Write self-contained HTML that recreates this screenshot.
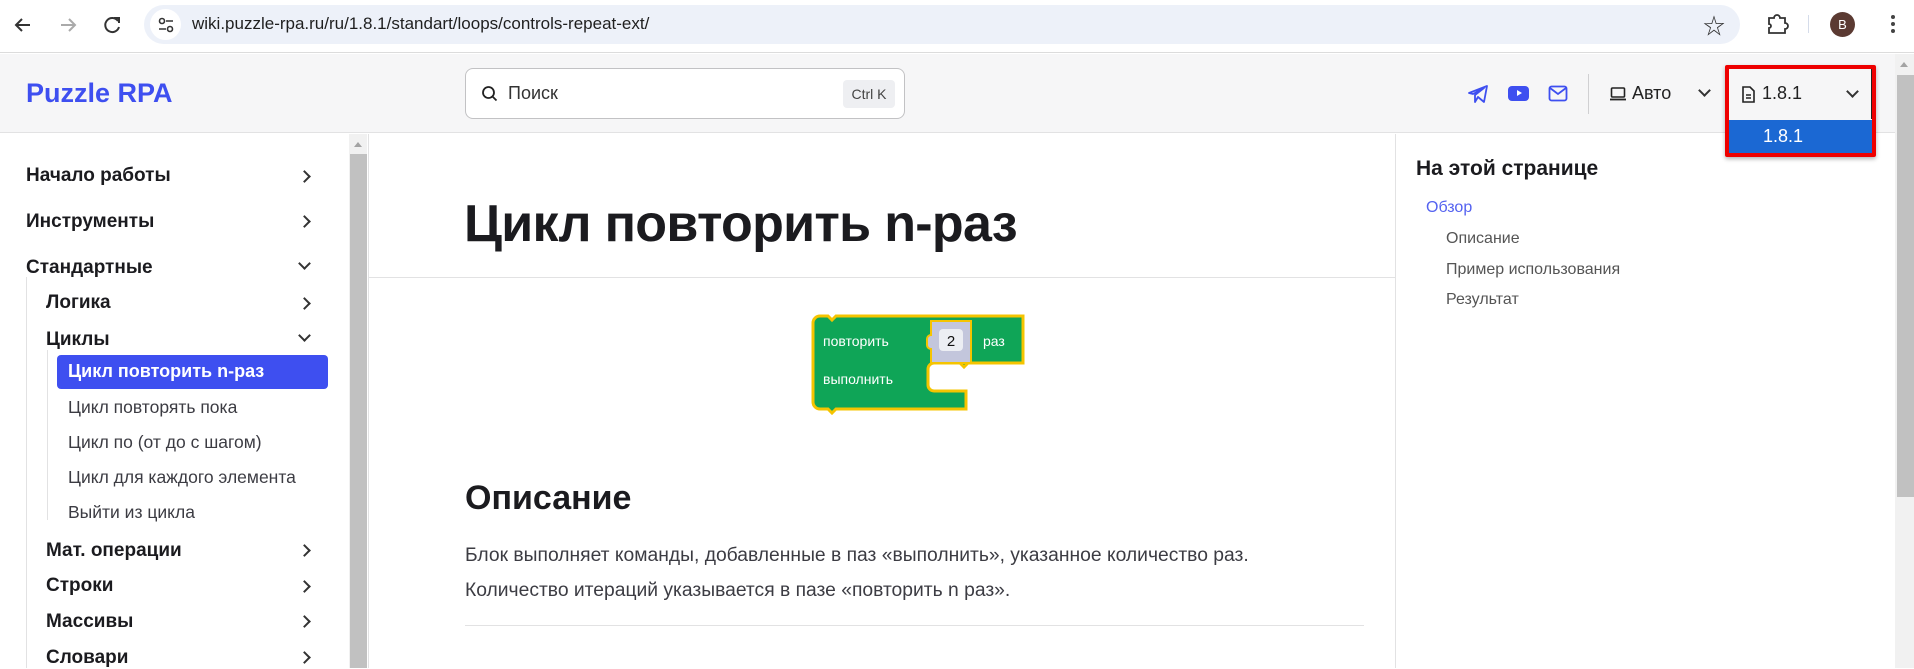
<!DOCTYPE html>
<html><head><meta charset="utf-8"><style>
*{margin:0;padding:0;box-sizing:border-box}
body{width:1914px;height:668px;overflow:hidden;background:#fff;font-family:"Liberation Sans","Noto Sans CJK SC",sans-serif;position:relative;color:#1b1b1f}
.a{position:absolute}
.sb{font-weight:600;font-size:19px;color:#1b1b1f}
.s3{font-size:17.5px;color:#3c3c43}
.chev{position:absolute;left:300px;width:9px;height:9px;border-right:2px solid #333;border-bottom:2px solid #333}
.r{transform:rotate(-45deg)}
.d{transform:rotate(45deg)}
.toc{position:absolute;left:1446px;font-size:16px;color:#555}
</style></head><body>
<div class="a" style="left:0;top:0;width:1914px;height:53px;background:#fff;border-bottom:1px solid #dcdcdc"></div>
<svg class="a" style="left:10px;top:12px" width="130" height="26" viewBox="0 0 130 26">
<path d="M20 13H6M12 7l-6 6 6 6" stroke="#333" stroke-width="2" fill="none"/>
<path d="M51 13h14M59 7l6 6-6 6" stroke="#aaa" stroke-width="2" fill="none"/>
<path d="M108 9a7 7 0 1 0 1 6" stroke="#333" stroke-width="2" fill="none"/><path d="M104 6h5v5" stroke="#333" stroke-width="2" fill="none"/>
</svg>
<div class="a" style="left:144px;top:5px;width:1596px;height:39px;border-radius:20px;background:#edf1f9"></div>
<div class="a" style="left:150px;top:9px;width:31px;height:31px;border-radius:50%;background:#fff"></div>
<svg class="a" style="left:157px;top:16px" width="18" height="18"><circle cx="5" cy="5" r="2.5" stroke="#333" stroke-width="1.6" fill="none"/><path d="M9 5h7M2 13h7" stroke="#333" stroke-width="1.6"/><circle cx="13" cy="13" r="2.5" stroke="#333" stroke-width="1.6" fill="none"/></svg>
<div class="a" style="left:192px;top:14px;font-size:17px;color:#1f1f1f">wiki.puzzle-rpa.ru/ru/1.8.1/standart/loops/controls-repeat-ext/</div>
<div class="a" style="left:1703px;top:9px;font-size:22px;color:#333">☆</div>
<svg class="a" style="left:1765px;top:12px" width="24" height="24"><path d="M4 6h5a3 3 0 0 1 6 0h5v5a3 3 0 0 1 0 6v4H4v-5a2 2 0 0 0 0-4z" stroke="#333" stroke-width="1.8" fill="none"/></svg>
<div class="a" style="left:1808px;top:15px;width:1px;height:18px;background:#d5dcea"></div>
<div class="a" style="left:1830px;top:12px;width:25px;height:25px;border-radius:50%;background:#5b3a32;color:#fff;font-size:13px;text-align:center;line-height:25px">B</div>
<div class="a" style="left:1891px;top:15px;width:4px;height:4px;border-radius:50%;background:#444;box-shadow:0 7px 0 #444,0 14px 0 #444"></div>
<div class="a" style="left:0;top:54px;width:1895px;height:79px;background:#f6f6f7;border-bottom:1px solid #e2e2e3"></div>
<div class="a" style="left:26px;top:78px;font-size:27px;font-weight:600;color:#3e4ff0">Puzzle RPA</div>
<div class="a" style="left:465px;top:68px;width:440px;height:51px;background:#fff;border:1px solid #c2c2c4;border-radius:8px"></div>
<svg class="a" style="left:481px;top:85px" width="18" height="18"><circle cx="7.5" cy="7.5" r="5.5" stroke="#222" stroke-width="1.8" fill="none"/><path d="M11.5 11.5l4 4" stroke="#222" stroke-width="1.8"/></svg>
<div class="a" style="left:508px;top:83px;font-size:18px;color:#333">Поиск</div>
<div class="a" style="left:843px;top:80px;width:52px;height:28px;background:#eeeff2;border-radius:4px;font-size:14px;color:#444;text-align:center;line-height:28px">Ctrl K</div>
<svg class="a" style="left:1467px;top:84px" width="22" height="20"><path d="M2 9L20 2l-3 16-6-5-3 5V11l9-7-11 6z" stroke="#3e4ff0" stroke-width="1.8" fill="none" stroke-linejoin="round"/></svg>
<div class="a" style="left:1508px;top:86px;width:21px;height:15px;border-radius:4px;background:#3e4ff0"></div>
<div class="a" style="left:1517px;top:90px;border-left:5px solid #fff;border-top:3.5px solid transparent;border-bottom:3.5px solid transparent"></div>
<svg class="a" style="left:1548px;top:85px" width="20" height="17"><rect x="1.5" y="1.5" width="17" height="14" rx="2" stroke="#3e4ff0" stroke-width="1.8" fill="none"/><path d="M2 3l8 6 8-6" stroke="#3e4ff0" stroke-width="1.8" fill="none"/></svg>
<div class="a" style="left:1588px;top:74px;width:1px;height:40px;background:#d0d0d2"></div>
<svg class="a" style="left:1609px;top:87px" width="18" height="14"><rect x="2.5" y="1" width="13" height="9" rx="1" stroke="#222" stroke-width="1.6" fill="none"/><path d="M1 12.5h16" stroke="#222" stroke-width="1.8"/></svg>
<div class="a" style="left:1632px;top:83px;font-size:18px;color:#222">Авто</div>
<div class="a" style="left:1700px;top:86px;width:9px;height:9px;border-right:2px solid #333;border-bottom:2px solid #333;transform:rotate(45deg)"></div>
<div class="a" style="left:1725px;top:65px;width:151px;height:92px;border:4px solid #ee0000;border-radius:2px;box-shadow:0 2px 4px rgba(0,0,0,.3)"></div>
<div class="a" style="left:1729px;top:69px;width:143px;height:50px;background:#f6f6f7;border-right:1px solid #222"></div>
<svg class="a" style="left:1741px;top:86px" width="14" height="17"><path d="M2 1h7l4 4v11H2z" stroke="#222" stroke-width="1.6" fill="none"/><path d="M5 9h5M5 12h5" stroke="#222" stroke-width="1.4"/></svg>
<div class="a" style="left:1762px;top:83px;font-size:18px;color:#222">1.8.1</div>
<div class="a" style="left:1848px;top:87px;width:9px;height:9px;border-right:2px solid #333;border-bottom:2px solid #333;transform:rotate(45deg)"></div>
<div class="a" style="left:1729px;top:120px;width:143px;height:33px;background:#1b68d3;color:#fff;font-size:18px;padding-left:34px;line-height:33px">1.8.1</div>
<div class="a" style="left:1895px;top:54px;width:19px;height:614px;background:#f1f1f1"></div>
<div class="a" style="left:1900px;top:62px;border-bottom:5px solid #a3a3a3;border-left:4.5px solid transparent;border-right:4.5px solid transparent"></div>
<div class="a" style="left:1897px;top:75px;width:17px;height:422px;background:#c1c1c1"></div>
<div class="a" style="left:349px;top:134px;width:18px;height:534px;background:#f1f1f1"></div>
<div class="a" style="left:354px;top:142px;border-bottom:5px solid #a3a3a3;border-left:4.5px solid transparent;border-right:4.5px solid transparent"></div>
<div class="a" style="left:350px;top:154px;width:17px;height:514px;background:#c1c1c1"></div>
<div class="a" style="left:368px;top:134px;width:1px;height:534px;background:#e2e2e3"></div>
<div class="a" style="left:26px;top:277px;width:1px;height:391px;background:#e2e2e3"></div>
<div class="a" style="left:47px;top:350px;width:1px;height:170px;background:#e2e2e3"></div>
<div class="a sb" style="left:26px;top:165px">Начало работы</div><div class="chev r" style="top:172px"></div>
<div class="a sb" style="left:26px;top:211px">Инструменты</div><div class="chev r" style="top:217px"></div>
<div class="a sb" style="left:26px;top:257px">Стандартные</div><div class="chev d" style="top:259px"></div>
<div class="a sb" style="left:46px;top:292px">Логика</div><div class="chev r" style="top:299px"></div>
<div class="a sb" style="left:46px;top:329px">Циклы</div><div class="chev d" style="top:331px"></div>
<div class="a" style="left:57px;top:355px;width:271px;height:34px;background:#3e4ff0;border-radius:4px"></div>
<div class="a" style="left:68px;top:361px;font-size:18px;font-weight:600;color:#fff">Цикл повторить n-раз</div>
<div class="a s3" style="left:68px;top:397px">Цикл повторять пока</div>
<div class="a s3" style="left:68px;top:432px">Цикл по (от до с шагом)</div>
<div class="a s3" style="left:68px;top:467px">Цикл для каждого элемента</div>
<div class="a s3" style="left:68px;top:502px">Выйти из цикла</div>
<div class="a sb" style="left:46px;top:540px">Мат. операции</div><div class="chev r" style="top:546px"></div>
<div class="a sb" style="left:46px;top:575px">Строки</div><div class="chev r" style="top:582px"></div>
<div class="a sb" style="left:46px;top:611px">Массивы</div><div class="chev r" style="top:617px"></div>
<div class="a sb" style="left:46px;top:647px">Словари</div><div class="chev r" style="top:653px"></div>
<div class="a" style="left:369px;top:277px;width:1026px;height:1px;background:#e2e2e3"></div>
<div class="a" style="left:1395px;top:134px;width:1px;height:534px;background:#e2e2e3"></div>
<div class="a" style="left:464px;top:194px;font-size:52px;font-weight:600;color:#1b1b1f;letter-spacing:-0.7px">Цикл повторить n-раз</div>
<svg class="a" style="left:805px;top:310px" width="225" height="105" viewBox="805 310 225 105">
<path d="M820 316h8l4 4 4-4h187v47H968l-4 4-4-4h-26a6 6 0 0 0-6 6v16a6 6 0 0 0 6 6h32v18H836l-4 4-4-4h-8a7 7 0 0 1-7-7V323a7 7 0 0 1 7-7z" fill="#0fa557" stroke="#f5c400" stroke-width="3"/>
<path d="M931 321h40v42h-40v-14a4 4 0 0 1-4-4v-6a4 4 0 0 1 4-4z" fill="#c3c6dc" stroke="#f5c400" stroke-width="2"/>
<rect x="939" y="329" width="24" height="22" rx="4" fill="#eceef3"/>
<text x="951" y="346" font-size="15" text-anchor="middle" fill="#111" font-family="Liberation Sans">2</text>
<text x="823" y="346" font-size="14" fill="#fff" font-family="Liberation Sans">повторить</text>
<text x="983" y="346" font-size="14" fill="#fff" font-family="Liberation Sans">раз</text>
<text x="823" y="384" font-size="14" fill="#fff" font-family="Liberation Sans">выполнить</text>
</svg>
<div class="a" style="left:465px;top:479px;font-size:34px;font-weight:600;color:#1b1b1f">Описание</div>
<div class="a" style="left:465px;top:545px;font-size:19.3px;color:#3c3c43">Блок выполняет команды, добавленные в паз «выполнить», указанное количество раз.</div>
<div class="a" style="left:465px;top:580px;font-size:19.3px;color:#3c3c43">Количество итераций указывается в пазе «повторить n раз».</div>
<div class="a" style="left:465px;top:625px;width:899px;height:1px;background:#e2e2e3"></div>
<div class="a" style="left:1416px;top:157px;font-size:21px;font-weight:600;color:#1b1b1f">На этой странице</div>
<div class="a" style="left:1426px;top:199px;font-size:16px;color:#5462f0">Обзор</div>
<div class="toc" style="top:230px">Описание</div>
<div class="toc" style="top:261px">Пример использования</div>
<div class="toc" style="top:291px">Результат</div>
</body></html>
